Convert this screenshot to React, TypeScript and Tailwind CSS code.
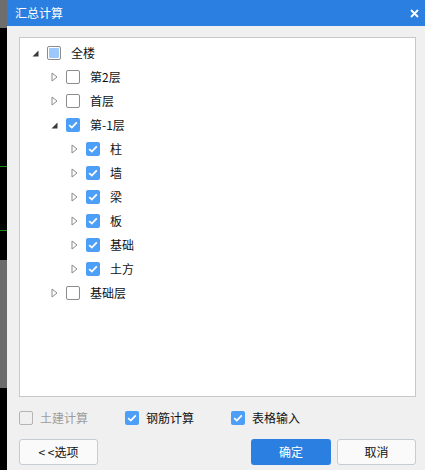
import React from 'react';

type CheckState = 'on' | 'off' | 'part';

type Node = {
  label: string;
  level: number;
  open: boolean;
  state: CheckState;
};

const nodes: Node[] = [
  { label: '全楼', level: 0, open: true, state: 'part' },
  { label: '第2层', level: 1, open: false, state: 'off' },
  { label: '首层', level: 1, open: false, state: 'off' },
  { label: '第-1层', level: 1, open: true, state: 'on' },
  { label: '柱', level: 2, open: false, state: 'on' },
  { label: '墙', level: 2, open: false, state: 'on' },
  { label: '梁', level: 2, open: false, state: 'on' },
  { label: '板', level: 2, open: false, state: 'on' },
  { label: '基础', level: 2, open: false, state: 'on' },
  { label: '土方', level: 2, open: false, state: 'on' },
  { label: '基础层', level: 1, open: false, state: 'off' },
];

function Box({ state, disabled }: { state: CheckState; disabled?: boolean }) {
  if (state === 'on') {
    return (
      <span className="flex h-[14px] w-[14px] shrink-0 items-center justify-center rounded-[2px] bg-[#4d9ef7]">
        <svg width="10" height="8" viewBox="0 0 10 8">
          <path d="M1.2 4.2 L3.8 6.6 L8.8 1.4" fill="none" stroke="#fff" strokeWidth="1.8" />
        </svg>
      </span>
    );
  }
  if (state === 'part') {
    return (
      <span className="flex h-[14px] w-[14px] shrink-0 items-center justify-center rounded-[2px] border border-[#8c8c8c] bg-white">
        <span className="h-[10px] w-[10px] rounded-[1px] bg-[#9cc8fb]" />
      </span>
    );
  }
  return (
    <span
      className={
        disabled
          ? 'block h-[14px] w-[14px] shrink-0 rounded-[2px] border border-[#b4b4b4] bg-[#f0f0f0]'
          : 'block h-[14px] w-[14px] shrink-0 rounded-[2px] border border-[#8c8c8c] bg-white'
      }
    />
  );
}

function Arrow({ open }: { open: boolean }) {
  return open ? (
    <svg width="7" height="7" viewBox="0 0 7 7">
      <path d="M6.5 0.5 L6.5 6.5 L0.5 6.5 Z" fill="#3a3a3a" />
    </svg>
  ) : (
    <svg width="7" height="10" viewBox="0 0 7 10">
      <path d="M1 1 L6 5 L1 9 Z" fill="#fff" stroke="#8a8a8a" strokeWidth="1" />
    </svg>
  );
}

const indent = ['pl-[11px]', 'pl-[30px]', 'pl-[50px]'];

export default function App() {
  return (
    <div
      className="flex h-[470px] w-[425px] overflow-hidden text-[12px] text-[#111]"
      style={{ fontFamily: '"Noto Sans CJK SC", "Noto Sans", sans-serif' }}
    >
      {/* background app strip */}
      <div className="flex w-[7px] shrink-0 flex-col">
        <div className="h-[28px] bg-[#6e6e6e]" />
        <div className="relative h-[232px] bg-black">
          <div className="absolute left-0 top-[138px] h-px w-[7px] bg-[#1e8a1e]" />
          <div className="absolute left-0 top-[202px] h-px w-[7px] bg-[#1e8a1e]" />
        </div>
        <div className="h-[128px] bg-[#6b6b6b]" />
        <div className="flex-1 bg-black" />
      </div>

      <div className="flex flex-1 flex-col bg-[#f0f0f0]">
        <div className="flex h-[26px] shrink-0 items-center justify-between bg-[#2b7fe0] pl-[8px] pr-[6px] text-white">
          <span className="text-[12px]">汇总计算</span>
          <svg width="9" height="9" viewBox="0 0 9 9">
            <path d="M1 1 L8 8 M8 1 L1 8" stroke="#fff" strokeWidth="1.8" />
          </svg>
        </div>

        <div className="flex flex-1 flex-col pl-[12px] pr-[9px] pt-[11px]">
          <div className="h-[360px] border border-[#c8c8c8] bg-white pt-[3px]">
            {nodes.map((n) => (
              <div key={n.label} className={`flex h-[24px] items-center ${indent[n.level]}`}>
                <span className="flex w-[8px] justify-center">
                  <Arrow open={n.open} />
                </span>
                <span className="ml-[8px] flex">
                  <Box state={n.state} />
                </span>
                <span className="ml-[10px]">{n.label}</span>
              </div>
            ))}
          </div>

          <div className="mt-[14px] flex h-[14px] items-center">
            <div className="flex w-[106px] items-center gap-[7px]">
              <Box state="off" disabled />
              <span className="text-[#9c9c9c]">土建计算</span>
            </div>
            <div className="flex w-[106px] items-center gap-[7px]">
              <Box state="on" />
              <span>钢筋计算</span>
            </div>
            <div className="flex items-center gap-[7px]">
              <Box state="on" />
              <span>表格输入</span>
            </div>
          </div>

          <div className="mt-[14px] flex items-center">
            <button className="h-[26px] w-[79px] rounded-[3px] border border-[#c6ccd6] bg-[#fafafa]">
              &lt; &lt;选项
            </button>
            <button className="ml-auto h-[26px] w-[80px] rounded-[3px] bg-[#2b7fe0] text-white">确定</button>
            <button className="ml-[6px] h-[26px] w-[79px] rounded-[3px] border border-[#c6ccd6] bg-[#fafafa]">
              取消
            </button>
          </div>
        </div>
      </div>
    </div>
  );
}
